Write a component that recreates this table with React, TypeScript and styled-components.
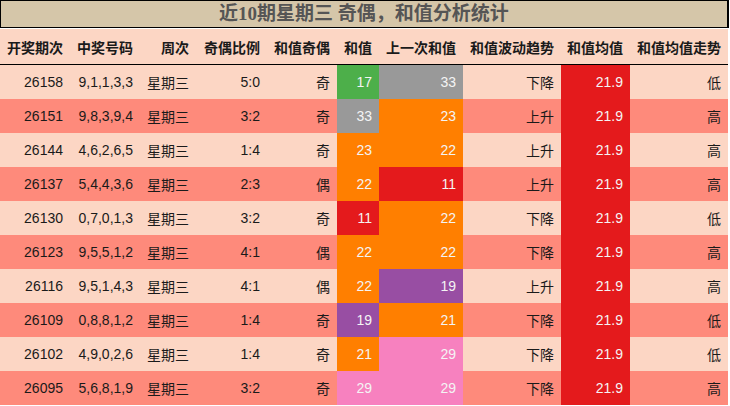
import React from "react";
import styled, { createGlobalStyle } from "styled-components";

const GlobalStyle = createGlobalStyle`
  html, body { margin: 0; padding: 0; background: #ffffff; }
  body { font-family: "Liberation Sans", "Noto Sans CJK SC", sans-serif; }
`;

const COLS = "70px 70px 56px 71px 70px 42px 84px 98px 69px 98px";

const Page = styled.div`
  width: 730px;
  display: flex;
  flex-direction: column;
`;

const TitleBar = styled.div`
  width: 729px;
  height: 28px;
  box-sizing: border-box;
  border: 1px solid #000;
  border-right-width: 2px;
  background: #d5c6a9;
  color: #555;
  font-family: "Liberation Serif", "Noto Sans CJK SC", serif;
  font-weight: bold;
  font-size: 19px;
  line-height: 26px;
  text-align: center;
  margin-bottom: 1px;
`;

const Row = styled.div<{ $alt?: boolean; $head?: boolean }>`
  display: grid;
  grid-template-columns: ${COLS};
  width: 728px;
  height: ${(p) => (p.$head ? "36px" : "34px")};
  box-sizing: border-box;
  background: ${(p) => (p.$alt ? "#fe8a7b" : "#fcd6c4")};
  border-bottom: ${(p) => (p.$head ? "1px solid #000" : "none")};
`;

const HeadCell = styled.div`
  display: flex;
  align-items: center;
  justify-content: flex-end;
  padding: 0 7px;
  font-family: "Noto Sans CJK SC", sans-serif;
  font-weight: bold;
  font-size: 14px;
  color: #1a1a1a;
  white-space: nowrap;
`;

const Cell = styled.div<{ $bg?: string }>`
  display: flex;
  align-items: center;
  justify-content: flex-end;
  padding: 0 7px;
  font-size: 14px;
  white-space: nowrap;
  background: ${(p) => p.$bg ?? "transparent"};
  color: ${(p) => (p.$bg ? "#f4f4f4" : "#1a1a1a")};
`;

const headers = [
  "开奖期次",
  "中奖号码",
  "周次",
  "奇偶比例",
  "和值奇偶",
  "和值",
  "上一次和值",
  "和值波动趋势",
  "和值均值",
  "和值均值走势",
];

type Rec = [string, string, string, string, number, number, string, string];

const rows: Rec[] = [
  ["26158", "9,1,1,3,3", "5:0", "奇", 17, 33, "下降", "低"],
  ["26151", "9,8,3,9,4", "3:2", "奇", 33, 23, "上升", "高"],
  ["26144", "4,6,2,6,5", "1:4", "奇", 23, 22, "上升", "高"],
  ["26137", "5,4,4,3,6", "2:3", "偶", 22, 11, "上升", "高"],
  ["26130", "0,7,0,1,3", "3:2", "奇", 11, 22, "下降", "低"],
  ["26123", "9,5,5,1,2", "4:1", "偶", 22, 22, "下降", "高"],
  ["26116", "9,5,1,4,3", "4:1", "偶", 22, 19, "上升", "高"],
  ["26109", "0,8,8,1,2", "1:4", "奇", 19, 21, "下降", "低"],
  ["26102", "4,9,0,2,6", "1:4", "奇", 21, 29, "下降", "低"],
  ["26095", "5,6,8,1,9", "3:2", "奇", 29, 29, "下降", "高"],
];

const sumColor = (v: number): string => {
  if (v <= 11) return "#e41a1c";
  if (v <= 17) return "#4daf4a";
  if (v <= 19) return "#984ea3";
  if (v <= 23) return "#ff7f00";
  if (v <= 29) return "#f781bf";
  return "#999999";
};

export default function App() {
  return (
    <Page>
      <GlobalStyle />
      <TitleBar>近10期星期三 奇偶，和值分析统计</TitleBar>
      <Row $head>
        {headers.map((h) => (
          <HeadCell key={h}>{h}</HeadCell>
        ))}
      </Row>
      {rows.map((r, i) => (
        <Row key={r[0]} $alt={i % 2 === 1}>
          <Cell>{r[0]}</Cell>
          <Cell>{r[1]}</Cell>
          <Cell>星期三</Cell>
          <Cell>{r[2]}</Cell>
          <Cell>{r[3]}</Cell>
          <Cell $bg={sumColor(r[4])}>{r[4]}</Cell>
          <Cell $bg={sumColor(r[5])}>{r[5]}</Cell>
          <Cell>{r[6]}</Cell>
          <Cell $bg="#e41a1c">21.9</Cell>
          <Cell>{r[7]}</Cell>
        </Row>
      ))}
    </Page>
  );
}
